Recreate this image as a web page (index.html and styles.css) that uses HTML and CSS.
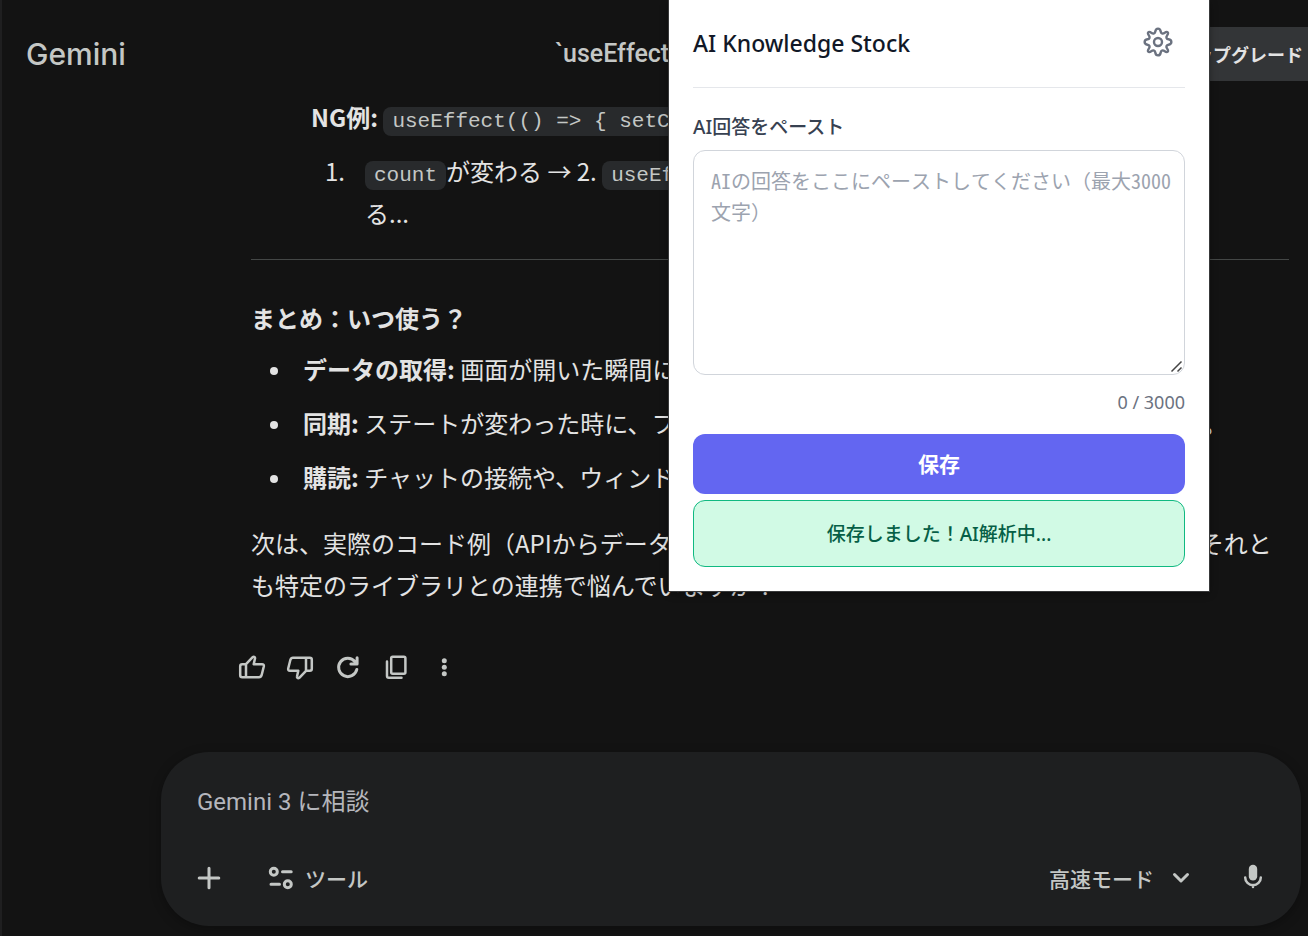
FILE: index.html
```html
<!DOCTYPE html>
<html lang="ja">
<head>
<meta charset="utf-8">
<meta name="viewport" content="width=device-width, initial-scale=1">
<title>Gemini</title>
<link rel="stylesheet" href="styles.css">
</head>
<body class="page">
  <header class="topbar">
    <div class="brand">Gemini</div>
    <h1 class="chat-title">`useEffect の使い方`</h1>
    <button class="upgrade" type="button">アップグレード</button>
  </header>

  <main class="answer">
    <div class="example">
      <p class="example-line"><strong>NG例:</strong> <code class="code">useEffect(() =&gt; { setCount(c + 1) })</code></p>
      <ol class="steps">
        <li class="step"><div><code class="code">count</code>が変わる → 2. <code class="code">useEffect</code>が動く → 3. また count が変わ<br>る...</div></li>
      </ol>
    </div>
    <hr class="rule">
    <h2 class="subhead">まとめ：いつ使う？</h2>
    <ul class="uses">
      <li class="use"><div><strong>データの取得:</strong> 画面が開いた瞬間にAPIを呼び出す。</div></li>
      <li class="use"><div><strong>同期:</strong> ステートが変わった時に、フィルタリングや計算などの処理を自動で実行する。</div></li>
      <li class="use"><div><strong>購読:</strong> チャットの接続や、ウィンドウサイズの監視。</div></li>
    </ul>
    <p class="closing">次は、実際のコード例（APIからデータを取得する処理など）を詳しく見ていきますか？それとも特定のライブラリとの連携で悩んでいますか？</p>
    <div class="actions">
      <button class="icon-button" type="button" aria-label="良い回答">
        <svg class="icon" viewBox="0 0 28 28"><path d="M8 11.200V24.200M8 24.200H4.200Q2.200 24.200 2.200 22.200V13.200Q2.200 11.200 4.200 11.200H8L14.700 4.200Q15.700 3.200 16.700 4.200Q17.200 4.800 17 5.500L15.700 11.200H24Q26.200 11.200 25.800 13.500L23.600 22.200Q23 24.200 21 24.200Z"/></svg>
      </button>
      <button class="icon-button" type="button" aria-label="良くない回答">
        <svg class="icon" viewBox="0 0 28 28"><path d="M20 17.800V4.800M20 4.800H23.800Q25.800 4.800 25.800 6.800V15.800Q25.800 17.800 23.800 17.800H20L13.300 24.800Q12.300 25.600 11.400 24.800Q10.800 24.200 11 23.500L12.300 17.800H4Q1.800 17.800 2.200 15.500L4.400 6.800Q5 4.800 7 4.800Z"/></svg>
      </button>
      <button class="icon-button" type="button" aria-label="やり直す">
        <svg class="icon" viewBox="0 0 28 28"><path class="wide" d="M22.800 16.500A9.200 9.200 0 1 1 20.900 8.500L22.500 10.300M23.100 4.700V11.100H16.900"/></svg>
      </button>
      <button class="icon-button" type="button" aria-label="コピー">
        <svg class="icon" viewBox="0 0 28 28"><rect x="9.200" y="3.700" width="14.200" height="17" rx="1.500"/><path d="M5 8.500V23Q5 24.800 6.800 24.800H19.500"/></svg>
      </button>
      <button class="icon-button" type="button" aria-label="その他">
        <svg class="icon icon-solid" viewBox="0 0 28 28"><circle cx="14.300" cy="7.800" r="2.500"/><circle cx="14.300" cy="14.300" r="2.500"/><circle cx="14.300" cy="20.800" r="2.500"/></svg>
      </button>
    </div>
  </main>

  <form class="composer">
    <input class="prompt" type="text" placeholder="Gemini 3 に相談" aria-label="プロンプト">
    <div class="composer-tools">
      <button class="tool" type="button" aria-label="追加">
        <svg class="icon" viewBox="0 0 28 28"><path class="wide" d="M14 4.200V23.800M4.200 14H23.800"/></svg>
      </button>
      <button class="tool tool-labelled" type="button">
        <svg class="icon" viewBox="0 0 28 28"><path class="wide" d="M15.500 7.800H24.200M4 20.200H12.500"/><circle class="wide" cx="6.800" cy="7.800" r="3.500"/><circle class="wide" cx="20.800" cy="20.200" r="3.500"/></svg>
        ツール
      </button>
      <button class="tool tool-mode" type="button">
        高速モード
        <svg class="icon" viewBox="0 0 28 28"><path class="wide" d="M7.500 10.500L14 17L20.500 10.500"/></svg>
      </button>
      <button class="tool" type="button" aria-label="マイク">
        <svg class="icon" viewBox="0 0 28 28"><rect class="solid" x="9.800" y="0.800" width="8.400" height="15.800" rx="4.200"/><path d="M6.200 13.400A7.800 7.800 0 0 0 21.800 13.400M14 21V23"/></svg>
      </button>
    </div>
  </form>

  <aside class="popup" aria-label="AI Knowledge Stock">
    <div class="popup-head">
      <h2 class="popup-title">AI Knowledge Stock</h2>
      <button class="settings" type="button" aria-label="設定">
        <svg class="gear" viewBox="0 0 30 30"><path d="M12.300 4.500C12.900 .7 17.100 .7 17.700 4.500C18 6.500 19.700 7.200 21.400 6C24.500 3.800 26.200 5.500 24 8.600C22.800 10.300 23.500 12 25.500 12.300C29.300 12.900 29.300 17.100 25.500 17.700C23.500 18 22.800 19.700 24 21.400C26.200 24.500 24.500 26.200 21.400 24C19.700 22.800 18 23.500 17.700 25.500C17.100 29.300 12.900 29.300 12.300 25.500C12 23.500 10.300 22.800 8.600 24C5.500 26.200 3.800 24.500 6 21.400C7.200 19.700 6.500 18 4.500 17.700C.7 17.100 .7 12.900 4.500 12.300C6.500 12 7.200 10.300 6 8.600C3.800 5.500 5.500 3.800 8.600 6C10.300 7.200 12 6.500 12.300 4.500Z"/><circle cx="15" cy="15" r="4"/></svg>
      </button>
    </div>
    <label class="field-label" for="paste">AI回答をペースト</label>
    <textarea class="paste" id="paste" maxlength="3000" placeholder="AIの回答をここにペーストしてください（最大3000文字）"></textarea>
    <div class="counter">0 / 3000</div>
    <button class="save" type="button">保存</button>
    <div class="status" role="status">保存しました！AI解析中...</div>
  </aside>
</body>
</html>
```
FILE: styles.css
```css
* {
  box-sizing: border-box;
}

.page {
  position: relative;
  display: flex;
  flex-direction: column;
  min-height: 100vh;
  margin: 0;
  overflow-x: hidden;
  border-left: 2px solid #1f1f20;
  background: #131313;
  color: #e3e3e3;
  font-family: "Noto Sans CJK JP", sans-serif;
  font-size: 24px;
  line-height: 42px;
}

button,
input,
textarea {
  margin: 0;
  font: inherit;
}

button {
  padding: 0;
  border: 0;
  background: none;
  color: inherit;
  cursor: pointer;
}

h1,
h2,
p,
ol,
ul {
  margin: 0;
  padding: 0;
}

.topbar {
  display: flex;
  align-items: center;
  padding: 27px 0 15px 24px;
  color: #c4c7c5;
}

.brand {
  width: 529px;
  font-family: Inter, "Noto Sans CJK JP", sans-serif;
  font-size: 30px;
  font-weight: 500;
}

.chat-title {
  flex: 1;
  font-family: Roboto, "Noto Sans CJK JP", sans-serif;
  font-size: 25px;
  font-weight: 500;
  white-space: nowrap;
}

.upgrade {
  height: 54px;
  padding: 0 5px 0 24px;
  border-radius: 8px 0 0 8px;
  background: #333537;
  color: #e3e3e3;
  font-size: 18px;
  font-weight: 700;
}

.answer {
  padding: 0 19px 0 249px;
}

.example {
  padding-left: 60px;
}

.example-line {
  margin-bottom: 12px;
}

.code {
  padding: 3px 9px;
  border-radius: 8px;
  background: #282a2c;
  color: #c4c7c5;
  font-family: "Liberation Mono", monospace;
  font-size: 21px;
  line-height: 24px;
}

.steps,
.uses {
  list-style: none;
}

.step,
.use {
  display: grid;
}

.step {
  grid-template-columns: 40px 1fr;
  padding-left: 14px;
}

.step::before {
  content: "1.";
}

.rule {
  height: 1px;
  margin: 25px 0 37px;
  border: 0;
  background: #444746;
}

.subhead {
  margin-bottom: 9px;
  font-size: 24px;
  font-weight: 700;
}

.uses {
  display: flex;
  flex-direction: column;
  gap: 12px;
}

.use {
  grid-template-columns: 33px 1fr;
  align-items: center;
  padding-left: 19px;
}

.use::before {
  content: "";
  width: 8px;
  height: 8px;
  margin-top: 4px;
  border-radius: 50%;
  background: #e3e3e3;
}

.closing {
  margin-top: 24px;
}

.actions {
  display: flex;
  margin: 37px 0 0 -23px;
  color: #c4c7c5;
}

.icon-button {
  display: grid;
  place-items: center;
  width: 48px;
  height: 48px;
}

.icon {
  flex: none;
  width: 28px;
  height: 28px;
  fill: none;
  stroke: currentColor;
  stroke-width: 2.500;
  stroke-linejoin: round;
  stroke-linecap: round;
}

.icon .wide {
  stroke-width: 3;
}

.icon-solid,
.icon .solid {
  fill: currentColor;
  stroke: none;
}

.composer {
  margin: auto 7px 10px 159px;
  padding: 26px 34px 34px;
  border-radius: 48px;
  background: #1e1f20;
  box-shadow: 0 3px 12px rgba(0, 0, 0, 0.3);
  color: #c4c7c5;
}

.prompt {
  display: block;
  width: 100%;
  height: 48px;
  padding: 0 2px;
  border: 0;
  outline: 0;
  background: none;
  color: #e3e3e3;
  font-family: Roboto, "Noto Sans CJK JP", sans-serif;
}

.prompt::placeholder {
  color: #b5b6bc;
  opacity: 1;
}

.composer-tools {
  display: flex;
  align-items: center;
  margin-top: 38px;
  font-size: 21px;
  font-weight: 500;
  line-height: 28px;
}

.tool {
  display: flex;
  align-items: center;
}

.tool-labelled {
  gap: 10px;
  margin-left: 44px;
}

.tool-mode {
  gap: 13px;
  margin: 0 44px 0 auto;
}

.popup {
  position: absolute;
  top: 0;
  right: 99px;
  width: 540px;
  padding: 15px 24px 24px;
  background: #ffffff;
  box-shadow: 0 0 0 1px #38393a, 0 2px 8px rgba(0, 0, 0, 0.4);
  color: #111827;
  font-family: "Noto Sans", "Noto Sans CJK JP", sans-serif;
  font-size: 19px;
  line-height: 29px;
}

.popup-head {
  display: flex;
  align-items: center;
  justify-content: space-between;
  padding-bottom: 18px;
  border-bottom: 1px solid #e5e7eb;
}

.popup-title {
  padding-top: 3px;
  font-size: 23px;
  font-weight: 500;
}

.settings {
  display: grid;
  padding: 12px;
}

.gear {
  width: 30px;
  height: 30px;
  fill: none;
  stroke: #6b7280;
  stroke-width: 2.400;
}

.field-label {
  display: block;
  margin: 25px 0 8px;
  color: #374151;
  font-weight: 500;
}

.paste {
  display: block;
  width: 100%;
  height: 225px;
  padding: 14px 12px 14px 17px;
  border: 1px solid #d1d5db;
  border-radius: 12px;
  outline: 0;
  background: #ffffff;
  color: #111827;
  font-family: "Noto Sans Mono CJK JP", "Noto Sans CJK JP", sans-serif;
  font-size: 20px;
  line-height: 31px;
  resize: vertical;
}

.paste::placeholder {
  color: #9ca3af;
  opacity: 1;
}

.paste::-webkit-resizer {
  background: url("data:image/svg+xml,%3Csvg xmlns='http://www.w3.org/2000/svg' viewBox='0 0 15 15'%3E%3Cpath d='M2.500 12.500L12.500 2.500M8.500 12.500L12.500 8.500' stroke='%23444' stroke-width='1.500'/%3E%3C/svg%3E") center / 15px 15px no-repeat;
}

.counter {
  margin: 13px 0 18px;
  color: #6b7280;
  font-size: 18px;
  line-height: 28px;
  text-align: right;
}

.save {
  display: block;
  width: 100%;
  height: 60px;
  border-radius: 12px;
  background: #6366f1;
  color: #ffffff;
  font-size: 21px;
  font-weight: 700;
}

.status {
  margin-top: 6px;
  padding: 19px 18px 17px;
  border: 1px solid #10b981;
  border-radius: 12px;
  background: #d1fae5;
  color: #065f46;
  font-weight: 500;
  text-align: center;
}
```
